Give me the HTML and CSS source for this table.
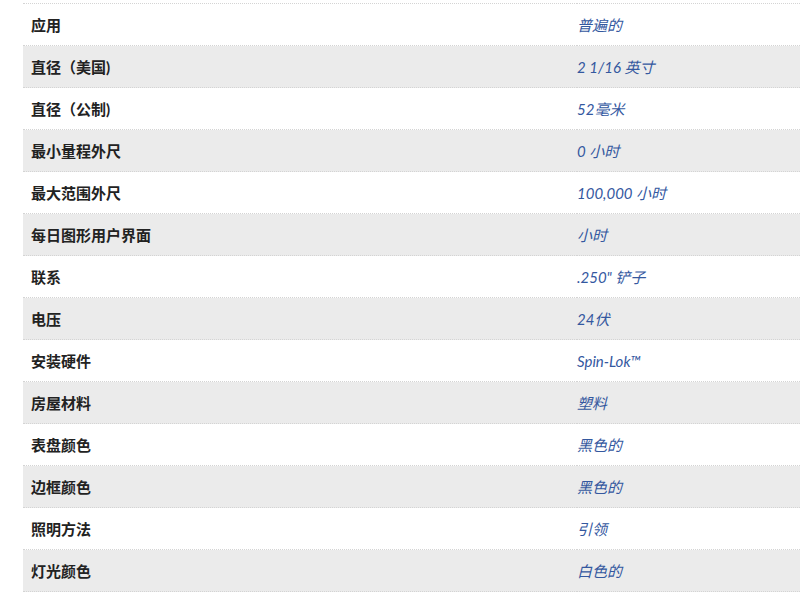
FILE: index.html
```html
<!DOCTYPE html>
<html lang="zh">
<head>
<meta charset="utf-8">
<link rel="stylesheet" href="styles.css">
</head>
<body>
<table class="specs">
<tbody>
<tr><th>应用</th><td>普遍的</td></tr>
<tr><th>直径（美国)</th><td>2 1/16 英寸</td></tr>
<tr><th>直径（公制)</th><td>52毫米</td></tr>
<tr><th>最小量程外尺</th><td>0 小时</td></tr>
<tr><th>最大范围外尺</th><td>100,000 小时</td></tr>
<tr><th>每日图形用户界面</th><td>小时</td></tr>
<tr><th>联系</th><td>.250" 铲子</td></tr>
<tr><th>电压</th><td>24伏</td></tr>
<tr><th>安装硬件</th><td>Spin-Lok™</td></tr>
<tr><th>房屋材料</th><td>塑料</td></tr>
<tr><th>表盘颜色</th><td>黑色的</td></tr>
<tr><th>边框颜色</th><td>黑色的</td></tr>
<tr><th>照明方法</th><td>引领</td></tr>
<tr><th>灯光颜色</th><td>白色的</td></tr>
</tbody>
</table>
</body>
</html>
```
FILE: styles.css
```css
html, body {
  margin: 0;
  padding: 0;
  background: #fff;
}
body {
  padding: 3px 0 0 23px;
  font-family: Lato, "Noto Sans CJK SC", sans-serif;
  font-size: 15px;
}
.specs {
  width: 777px;
  border-collapse: collapse;
  border-top: 1px dotted #d4d4d4;
}
.specs tr {
  height: 42px;
  border-bottom: 1px dotted #d4d4d4;
}
.specs tr:nth-child(even) {
  background: #ebebeb;
}
.specs th {
  width: 546px;
  padding: 0 0 0 8px;
  text-align: left;
  font-weight: bold;
  color: #222;
}
.specs td {
  padding: 0;
  font-style: italic;
  color: #34589f;
}
```
